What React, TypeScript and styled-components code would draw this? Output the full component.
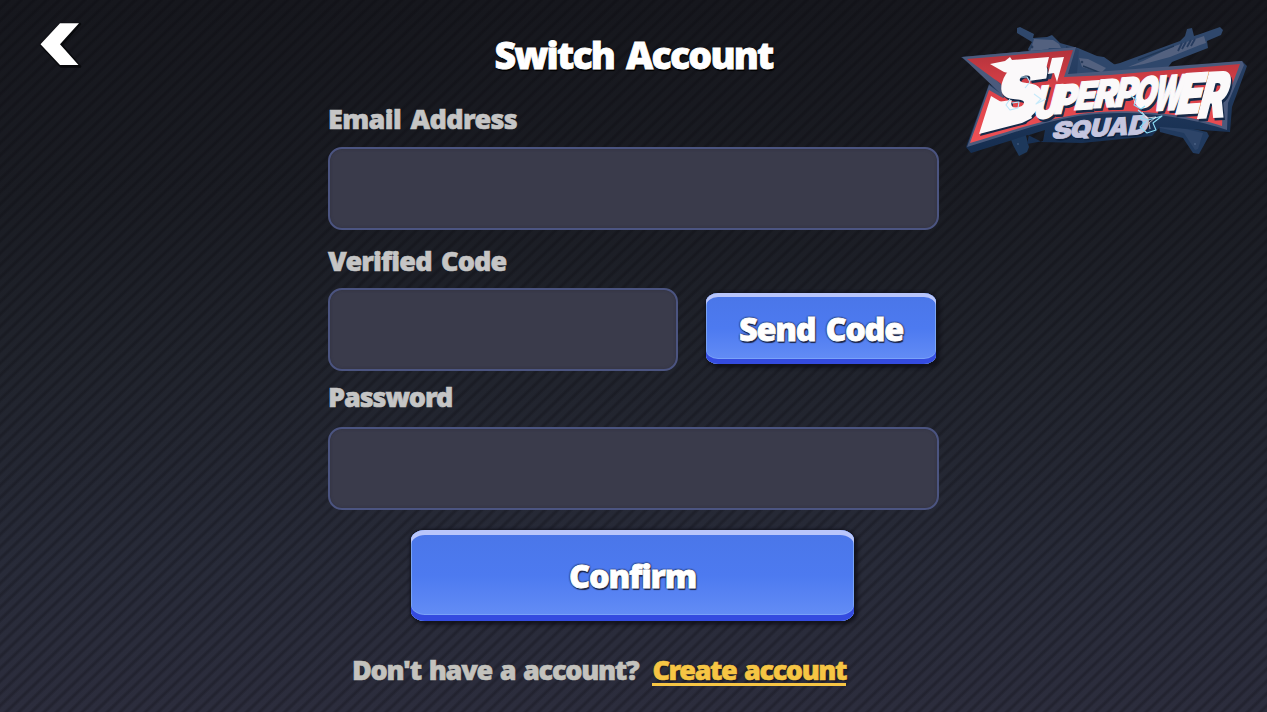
import React from 'react';
import styled, { createGlobalStyle } from 'styled-components';

const GlobalStyle = createGlobalStyle`
  *, *::before, *::after { box-sizing: border-box; }
  body { margin: 0; background: #14151b; }
`;

const font = '"Noto Sans", "Open Sans", sans-serif';

const Screen = styled.main`
  display: grid;
  grid-template-columns: 328px 611px 1fr;
  width: 1267px;
  height: 712px;
  overflow: hidden;
  font-family: ${font};
  font-weight: 900;
  background:
    repeating-linear-gradient(136deg,
      rgba(8, 7, 12, 0) 0, rgba(8, 7, 12, 0) 3.4px,
      rgba(8, 7, 12, 0.26) 5.6px, rgba(8, 7, 12, 0.26) 6.6px,
      rgba(8, 7, 12, 0) 8.8px),
    linear-gradient(#16171d 0%, #1a1c23 28%, #20232c 50%, #282b39 80%, #2c2d3d 100%);
`;

const Side = styled.div`
  display: flex;
  align-items: flex-start;
`;

const BackButton = styled.button`
  margin: 16px 0 0 34px;
  padding: 0;
  border: 0;
  background: none;
  line-height: 0;
`;

const LogoSvg = styled.svg`
  margin: 15px 0 0 11px;
  flex: none;
`;

const Form = styled.form`
  display: flex;
  flex-direction: column;
`;

const Title = styled.h1`
  margin: 15px 0 3px;
  font-size: 37.5px;
  font-weight: 900;
  line-height: 80px;
  letter-spacing: -1.8px;
  word-spacing: 4px;
  text-align: center;
  color: #fff;
  -webkit-text-stroke: 0.8px #fff;
  text-shadow: 1px 2px 1px #000, 0 0 2px #000;
  white-space: nowrap;
`;

const Label = styled.label<{ $above?: number; $below: number; $track: number }>`
  margin: ${p => p.$above ?? 0}px 0 ${p => p.$below}px;
  font-size: 27px;
  line-height: 41px;
  letter-spacing: ${p => p.$track}px;
  word-spacing: 3px;
  color: #c5c5c5;
  -webkit-text-stroke: 0.6px #c5c5c5;
  white-space: nowrap;
`;

const Input = styled.input<{ $width?: number }>`
  width: ${p => (p.$width ? `${p.$width}px` : '100%')};
  height: 83px;
  padding: 0 20px;
  border: 2px solid #4b5480;
  border-radius: 14px;
  outline: 0;
  background: #3a3b4b;
  box-shadow: inset 0 0 3px #30303f;
  color: #fff;
  font: 700 26px ${font};
`;

const CodeRow = styled.div`
  display: flex;
  justify-content: space-between;
  padding-right: 3px;
`;

const Button = styled.button<{ $w: number; $h: number; $edge: number; $track: number }>`
  width: ${p => p.$w}px;
  height: ${p => p.$h}px;
  padding: 2px 0 ${p => p.$edge - 3}px;
  border: 0;
  border-radius: ${p => p.$edge * 2 + 2}px / ${p => p.$edge + 4}px;
  background: linear-gradient(#4a76e8, #4d7af0 50%, #668ff6);
  box-shadow:
    inset 0 -${p => p.$edge}px 0 #344be0,
    inset 0 -${p => p.$edge + 1}px 0 #79a2f8,
    inset 0 ${p => p.$edge - 1}px 0 #b9c6fb,
    inset 1px 0 0 #78a3f5,
    inset -1px 0 0 #78a3f5,
    0 0 3px 1px #14151f,
    3px 3px 4px rgba(10, 10, 18, 0.75);
  color: #fff;
  font: 900 32.5px ${font};
  letter-spacing: ${p => p.$track}px;
  word-spacing: 3px;
  -webkit-text-stroke: 0.8px #fff;
  text-shadow: 1px 2px 1px #1c2547, 0 0 2px #131a33, 0 0 2px #131a33, 0 0 2px #131a33;
  white-space: nowrap;
`;

const SendButton = styled(Button)`
  margin-top: 5px;
`;

const ConfirmButton = styled(Button)`
  margin: 20px 0 0 83px;
`;

const Footer = styled.p`
  display: flex;
  align-items: flex-start;
  gap: 14px;
  margin: 28px 0 0 24px;
  font-size: 27px;
  line-height: 41px;
  word-spacing: 2px;
  color: #c3c2bd;
  white-space: nowrap;
`;

const Prompt = styled.span`
  letter-spacing: -1.24px;
  -webkit-text-stroke: 0.6px #c3c2bd;
`;

const CreateLink = styled.a`
  height: 37px;
  border-bottom: 3px solid #f6c544;
  letter-spacing: -1.38px;
  color: #f6c544;
  -webkit-text-stroke: 0.6px #f6c544;
  text-shadow: 1px 1px 1px #16161e, 0 0 2px #16161e;
`;

type LetterSpec = { ch: string; x: number; y: number; w: number; h: number; rise?: number };

const advance: Record<string, number> = {
  S: 6.9, U: 7.6, P: 6.8, E: 6.3, R: 6.9, O: 8, W: 10.9, Q: 8, A: 7.9, D: 7.4,
};

const superpower: LetterSpec[] = [
  { ch: 'S', x: 989, y: 125, w: 50, h: 60, rise: -0.14 },
  { ch: 'U', x: 1032, y: 119, w: 25, h: 33 },
  { ch: 'P', x: 1053, y: 114, w: 22, h: 29 },
  { ch: 'E', x: 1073, y: 110, w: 21, h: 28 },
  { ch: 'R', x: 1092, y: 108, w: 24, h: 28 },
  { ch: 'P', x: 1113, y: 107, w: 23, h: 29 },
  { ch: 'O', x: 1132, y: 108, w: 23, h: 31 },
  { ch: 'W', x: 1151, y: 111, w: 29, h: 35 },
  { ch: 'E', x: 1174, y: 114, w: 26, h: 40 },
  { ch: 'R', x: 1196, y: 118, w: 28, h: 45 },
];

const squad: LetterSpec[] = [
  { ch: 'S', x: 1051, y: 139, w: 20, h: 17 },
  { ch: 'Q', x: 1069, y: 138, w: 21, h: 17 },
  { ch: 'U', x: 1089, y: 137, w: 20, h: 18 },
  { ch: 'A', x: 1107, y: 136, w: 20, h: 18 },
  { ch: 'D', x: 1127, y: 135, w: 20, h: 19 },
];

function Word({ letters, dx = 0, dy = 0, fill }: {
  letters: LetterSpec[]; dx?: number; dy?: number; fill: string;
}) {
  return (
    <g fill={fill} stroke={fill} strokeWidth={0.35} strokeLinejoin="miter" fontFamily="Inter, sans-serif" fontWeight={900} fontSize={10}>
      {letters.map((l, i) => {
        const sx = l.w / advance[l.ch];
        const sy = l.h / 7.27;
        return (
          <text key={i} transform={`matrix(${sx} ${(l.rise ?? -0.06) * sx} ${-0.26 * sy} ${sy} ${l.x + dx} ${l.y + dy})`}>
            {l.ch}
          </text>
        );
      })}
    </g>
  );
}

function Logo() {
  return (
    <LogoSvg width="305" height="148" viewBox="950 15 305 148" role="img" aria-label="Superpower Squad">
      <defs>
        <linearGradient id="red" x1="0" y1="0" x2="0" y2="1">
          <stop offset="0" stopColor="#b3323b" />
          <stop offset="0.45" stopColor="#dc4249" />
          <stop offset="1" stopColor="#f05156" />
        </linearGradient>
        <linearGradient id="navy" x1="0" y1="0" x2="0" y2="1">
          <stop offset="0" stopColor="#2b4266" />
          <stop offset="1" stopColor="#152d4f" />
        </linearGradient>
      </defs>
      {/* crossed guns */}
      <g fill="#2f476b">
        <path d="M1017 28L1020 27L1034 34L1033 38L1047 37L1052 35L1060 43L1078 48L1097 56L1104 57L1118 67L1112 80H1040L1028 49L1032 42L1017 33Z" />
        <path d="M1104 67L1120 63L1180 41L1185 36L1187 29L1192 28L1194 36L1203 33L1220 27L1223 30L1221 35L1207 41L1208 48L1172 62L1166 70L1108 78Z" />
        <path d="M1158 121L1207 132L1209 136L1199 154L1193 153L1183 138L1160 132Z" fill="#213a5e" />
        <path d="M1010 137L1025 132L1029 147L1027 152L1019 156L1013 145Z" fill="#1d385b" />
      </g>
      <g fill="#53617f">
        <path d="M1034 39L1053 40L1059 44L1061 48L1049 48L1047 51L1030 52Z" />
        <path d="M1079 58L1088 59L1106 68L1101 73L1082 67Z" />
        <path d="M1172 47L1204 36L1206 43L1200 45L1170 57L1144 64L1128 67L1143 61Z" />
        <path d="M1158 121L1172 126L1203 133L1198 149L1195 150L1184 133L1160 128Z" fill="#2d4468" />
      </g>
      <path d="M1178 51L1182 43M1182 49L1186 42M1187 47L1191 40M1191 46L1195 39" stroke="#263b5e" strokeWidth="1.8" />
      <path d="M1138 60L1174 46M1066 47L1078 51M1083 66L1106 75" stroke="#203655" strokeWidth="1.4" fill="none" />
      <circle cx="1032" cy="47" r="1.4" fill="#283c5b" />
      <circle cx="1082" cy="62" r="1.3" fill="#283c5b" />
      <circle cx="1018" cy="144" r="1.1" fill="#3b5375" />
      <circle cx="1195" cy="144" r="1.1" fill="#465d80" />

      {/* badge body */}
      <path fill="url(#navy)" fillRule="evenodd" d="M961 57L1075 47L1079 50L1077 74L1110 73L1242 61L1247 66L1232 107L1230 132L1160 127L1152 136L1082 143L1042 142L1028 135L971 153L966 147L989 84L996 88L994 83ZM1029 135L1045 130L1043 141L1027 144Z" />
      <path fill="#4b5a7c" d="M962 57L1076 47L1068 74L1242 61L1244 65L1228 103L1227 130C1190 117 1130 108 1078 116C1040 122 1005 136 967 147L989 85L1000 93Z" />
      <path fill="url(#red)" d="M967 59L1073 50L1064 77L1110 75L1240 64L1227 98L1223 102L1222 126C1190 115 1130 107 1080 114C1040 120 1005 133 970 143L989 90L1003 98L1001 84Z" />
      <path fill="#273f64" d="M1023 76L1053 72L1051 79L1032 82L1029 80Z" />
      <path fill="#3c4a6b" d="M1003 98L1001 84L995 79L1010 94Z" />

      {/* wordmark with its drop shadow */}
      <Word letters={superpower} dx={1.5} dy={2.5} fill="#162a49" />
      <path fill="#162a49" d="M980 136L993 99L1010 109L1003 120L1030 119L1026 124Z" />
      <Word letters={superpower} fill="#fbf9fa" />
      <g fill="#fbf9fa">
        <path d="M979 134L991 96L1008 106L1004 115L1030 112L1032 118L1022 123Z" />
        <path d="M990 64L1005 61L1010 57L1012 60L1049 57L1046 69L1041 73L1012 74L1004 72Z" />
        <path d="M1052 58L1064 57L1057 82L1054 73L1048 74Z" />
      </g>

      <Word letters={squad} dx={1} dy={1.5} fill="#0c203f" />
      <Word letters={squad} fill="#c5c5df" />

      {/* electric sparks */}
      <g fill="none" stroke="#8bdcf5" strokeWidth="1.1" strokeLinejoin="round">
        <path d="M1138 110L1144 115L1140 118L1148 120L1162 116L1153 123L1156 130L1147 133L1140 127L1146 121" />
        <path d="M1131 96L1136 99L1134 105L1141 109L1145 106" />
        <path d="M1021 77L1027 77L1030 82L1025 88M1010 99L1006 105L1010 110L1018 108L1019 102L1012 103" stroke="#b9e5fa" />
        <path d="M1034 94L1041 99L1036 104L1046 99" stroke="#c7eafa" />
      </g>
      <g fill="none" stroke="#fff" strokeWidth="0.7">
        <path d="M1142 112L1147 118L1156 117L1149 123L1150 129" />
        <path d="M1133 97L1135 103L1141 107" />
      </g>
    </LogoSvg>
  );
}

export default function App() {
  return (
    <>
      <GlobalStyle />
      <Screen>
        <Side>
          <BackButton type="button" aria-label="Back">
            <svg width="56" height="58" viewBox="34 16 56 58">
              <path d="M61 24H80L61.500 45L80 66.500H61L41 45Z" fill="#08090c" stroke="#08090c" strokeWidth="2.500" strokeLinejoin="round" />
              <path d="M60 23.300H79L60 44.300L78.500 65H60L40.500 44.300Z" fill="#fff" />
            </svg>
          </BackButton>
        </Side>
        <Form>
          <Title>Switch Account</Title>
          <Label htmlFor="email" $below={8} $track={-0.62}>Email Address</Label>
          <Input id="email" />
          <Label htmlFor="code" $above={10} $below={7} $track={-0.82}>Verified Code</Label>
          <CodeRow>
            <Input id="code" $width={350} />
            <SendButton type="button" $w={230} $h={71} $edge={5} $track={-1.3}>Send Code</SendButton>
          </CodeRow>
          <Label htmlFor="password" $above={5} $below={10} $track={-1.1}>Password</Label>
          <Input id="password" type="password" />
          <ConfirmButton type="button" $w={443} $h={91} $edge={6} $track={-1.2}>Confirm</ConfirmButton>
          <Footer>
            <Prompt>Don't have a account?</Prompt>
            <CreateLink>Create account</CreateLink>
          </Footer>
        </Form>
        <Side>
          <Logo />
        </Side>
      </Screen>
    </>
  );
}
